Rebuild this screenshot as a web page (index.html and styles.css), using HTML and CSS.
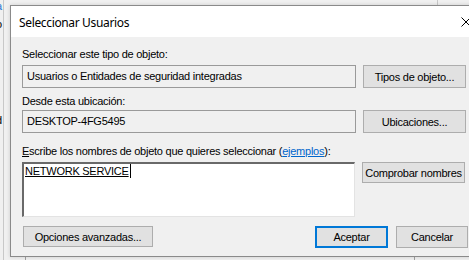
FILE: index.html
```html
<!DOCTYPE html>
<html lang="es">
<head>
    <meta charset="UTF-8">
    <meta name="viewport" content="width=device-width, initial-scale=1.0">
    <title>Seleccionar Usuarios</title>
    <link rel="stylesheet" href="styles.css">
</head>
<body>
    <div class="desktop">
        <!-- bits of the window behind -->
        <div class="behind-line line-a"></div>
        <div class="behind-line line-b"></div>
        <div class="behind-line line-c"></div>
        <div class="behind-line line-d"></div>
        <div class="behind-text">
            <span class="blue">a</span>
            <span>o</span>
            <span class="red">i</span>
            <span>d</span>
            <span class="blue">:</span>
        </div>

        <div class="dialog">
            <div class="titlebar">
                <span class="title">Seleccionar Usuarios</span>
                <svg class="close" width="10" height="10" viewBox="0 0 10 10">
                    <path d="M0.5 0.5 L9.5 9.5 M9.5 0.5 L0.5 9.5" stroke="#000" stroke-width="1" fill="none"/>
                </svg>
            </div>

            <div class="content">
                <div class="label first">Seleccionar este tipo de objeto:</div>
                <div class="row">
                    <div class="field">Usuarios o Entidades de seguridad integradas</div>
                    <button class="btn">Tipos de objeto...</button>
                </div>

                <div class="label">Desde esta ubicación:</div>
                <div class="row">
                    <div class="field">DESKTOP-4FG5495</div>
                    <button class="btn">Ubicaciones...</button>
                </div>

                <div class="label third"><u>E</u>scribe los nombres de objeto que quieres seleccionar (<a href="#" class="link">ejemplos</a>):</div>
                <div class="row">
                    <div class="names"><span class="name">NETWORK SERVICE</span><span class="caret"></span></div>
                    <button class="btn small">Comprobar nombres</button>
                </div>

                <div class="bottom">
                    <button class="btn advanced">Opciones avanzadas...</button>
                    <div class="actions">
                        <button class="btn ok">Aceptar</button>
                        <button class="btn cancel">Cancelar</button>
                    </div>
                </div>
            </div>
        </div>
    </div>
</body>
</html>
```

FILE: styles.css
```css
body {
    margin: 0;
    background-color: #f0f0f0;
    font-family: "Liberation Sans", Arial, sans-serif;
    font-size: 11px;
    letter-spacing: -0.25px;
    color: #000;
    overflow: hidden;
}

.desktop {
    position: relative;
    width: 469px;
    height: 260px;
    overflow: hidden;
    background-color: #f0f0f0;
}

.behind-line {
    position: absolute;
    background-color: #c8c8c8;
}
.line-a { left: 3px; top: 0; width: 1px; height: 260px; }
.line-b { left: 25px; top: 250px; width: 1px; height: 10px; background-color: #a0a0a0; }
.line-c { left: 414px; top: 250px; width: 1px; height: 10px; background-color: #a0a0a0; }
.line-d { left: 437px; top: 0; width: 1px; height: 8px; }

.behind-text {
    position: absolute;
    left: -4px;
    top: 0;
    width: 7px;
    overflow: hidden;
    display: flex;
    flex-direction: column;
    font-size: 11px;
}
.behind-text span { height: 12px; margin-bottom: 6px; }
.behind-text span:nth-child(3) { margin-top: 60px; }
.behind-text .blue { color: #2a7ad5; }
.behind-text .red { color: #8b1a1a; }

.dialog {
    position: absolute;
    left: 10px;
    top: 5px;
    width: 480px;
    border: 1px solid #8a8a8a;
    background-color: #f0f0f0;
    box-shadow: 0 0 4px rgba(0, 0, 0, 0.15);
}

.titlebar {
    height: 31px;
    background-color: #fff;
    display: flex;
    align-items: center;
    position: relative;
}
.title {
    font-family: "Noto Sans", "Open Sans", sans-serif;
    font-size: 12px;
    margin-left: 8px;
    margin-top: 1px;
    letter-spacing: -0.35px;
}
.close {
    position: absolute;
    left: 450px;
    top: 11px;
}

.content {
    padding: 11px 0 8px 11px;
}

.label {
    line-height: 13px;
    height: 13px;
    margin-top: 7px;
    margin-bottom: 2px;
    white-space: nowrap;
}
.label.first { margin-top: 0; margin-bottom: 4px; }
.label.third { margin-top: 12px; margin-bottom: 4px; }

.link {
    color: #0066cc;
}

.row {
    display: flex;
    align-items: flex-start;
    gap: 7px;
}

.field {
    height: 21px;
    border: 1px solid #9a9a9a;
    background-color: #f0f0f0;
    padding-left: 4px;
    line-height: 20px;
    box-sizing: content-box;
    width: 328px;
    white-space: nowrap;
}

.btn {
    font-family: "Liberation Sans", Arial, sans-serif;
    font-size: 11px;
    letter-spacing: -0.25px;
    color: #000;
    background-color: #e1e1e1;
    border: 1px solid #adadad;
    width: 103px;
    height: 23px;
    padding: 0;
    margin: 0;
}
.btn.small { height: 21px; }

.names {
    width: 330px;
    height: 52px;
    background-color: #fff;
    border-top: 2px solid #696969;
    border-left: 2px solid #696969;
    border-right: 1px solid #e3e3e3;
    border-bottom: 1px solid #e3e3e3;
    display: flex;
    align-items: flex-start;
    line-height: 14px;
}
.name {
    text-decoration: underline;
    margin-left: 1px;
}
.caret {
    width: 1px;
    height: 14px;
    margin-left: 1px;
    background-color: #000;
}

.bottom {
    display: flex;
    justify-content: space-between;
    margin-top: 9px;
    padding-right: 23px;
}
.advanced {
    width: 130px;
    height: 21px;
    margin-left: 1px;
}
.actions {
    display: flex;
    gap: 8px;
}
.ok {
    width: 73px;
    height: 22px;
    border: 2px solid #0078d7;
}
.cancel {
    width: 72px;
    height: 22px;
}
```
